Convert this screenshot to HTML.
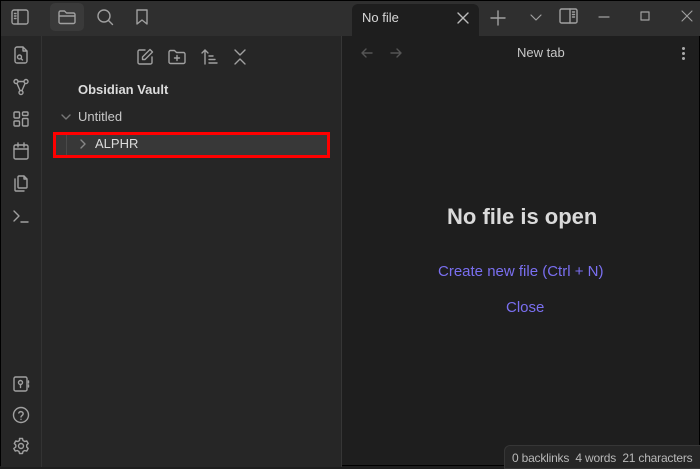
<!DOCTYPE html>
<html><head><meta charset="utf-8"><style>
*{margin:0;padding:0;box-sizing:border-box}
body{width:700px;height:466px;overflow:hidden;background:#1e1e1e;font-family:"Segoe UI","Liberation Sans",sans-serif;position:relative;border:1px solid #000}
.abs{position:absolute}
svg{position:absolute;fill:none;stroke:#a0a0a0;stroke-width:1.4;stroke-linecap:round;stroke-linejoin:round}
.t{color:#dcdcdc;font-size:13px;position:absolute;white-space:nowrap}
</style></head><body>
<div class="abs" style="left:0;top:0;width:700px;height:35px;background:#2f2f2f"></div>
<div class="abs" style="left:0;top:35px;width:41px;height:431px;background:#262626;border-right:1px solid #333"></div>
<div class="abs" style="left:41px;top:35px;width:300px;height:431px;background:#262626;border-right:1px solid #363636"></div>
<svg style="left:9px;top:6px" width="20" height="20" viewBox="0 0 20 20"><rect x="2" y="3" width="16" height="14" rx="2"/><path d="M8 3v14M4.5 6.5h1.5M4.5 9h1.5M4.5 11.5h1.5"/></svg>
<div class="abs" style="left:49px;top:2px;width:34px;height:28px;background:#3a3a3a;border-radius:5px"></div>
<svg style="left:56px;top:6px" width="20" height="20" viewBox="0 0 20 20"><path d="M2 5.5a1.5 1.5 0 0 1 1.5-1.5h4l2 2h7a1.5 1.5 0 0 1 1.5 1.5v7.5a1.5 1.5 0 0 1-1.5 1.5h-13A1.5 1.5 0 0 1 2 15zM2 9h16"/></svg>
<svg style="left:94px;top:6px" width="20" height="20" viewBox="0 0 20 20"><circle cx="9" cy="9" r="6"/><path d="M13.5 13.5l4 4"/></svg>
<svg style="left:131px;top:6px" width="20" height="20" viewBox="0 0 20 20"><path d="M5 3h10v14l-5-4-5 4z"/></svg>
<div class="abs" style="left:351px;top:3px;width:127px;height:32px;background:#1e1e1e;border-radius:6px 6px 0 0"></div>
<div class="t" style="left:361px;top:9px;color:#d8d8d8">No file</div>
<svg style="left:455px;top:10px;stroke:#bbb" width="14" height="14" viewBox="0 0 14 14"><path d="M2 2l10 10M12 2L2 12"/></svg>
<svg style="left:488px;top:8px" width="18" height="18" viewBox="0 0 18 18"><path d="M9 2v14M2 9h14"/></svg>
<svg style="left:527px;top:8px;stroke-width:1.2" width="16" height="16" viewBox="0 0 16 16"><path d="M3 6l5 5 5-5"/></svg>
<svg style="left:557px;top:5px" width="22" height="22" viewBox="0 0 22 22"><rect x="2" y="3" width="17" height="14" rx="1.5"/><path d="M12 3v14M14.5 6h2M14.5 8.5h2M14.5 11h2"/></svg>
<svg style="left:595px;top:8px;stroke-width:1.2" width="16" height="16" viewBox="0 0 16 16"><path d="M3 8h10"/></svg>
<svg style="left:636px;top:7px;stroke-width:1.2" width="16" height="16" viewBox="0 0 16 16"><rect x="4" y="4" width="8" height="8"/></svg>
<svg style="left:678px;top:7px;stroke-width:1.1" width="16" height="16" viewBox="0 0 16 16"><path d="M3 3l10 10M13 3L3 13"/></svg>
<svg style="left:10px;top:44px" width="20" height="20" viewBox="0 0 20 20"><path d="M12 2H6a2 2 0 0 0-2 2v12a2 2 0 0 0 2 2h8a2 2 0 0 0 2-2V6zM12 2v4h4"/><circle cx="8.5" cy="12" r="2"/><path d="M10 13.5l1.5 1.5"/></svg>
<svg style="left:10px;top:76px" width="20" height="20" viewBox="0 0 20 20"><circle cx="5" cy="4.5" r="2"/><circle cx="15" cy="4.5" r="2"/><circle cx="10" cy="15.5" r="2"/><path d="M6 6.5l3 7M14 6.5l-3 7M7 4.5h6"/></svg>
<svg style="left:10px;top:108px" width="20" height="20" viewBox="0 0 20 20"><rect x="3" y="3" width="5.5" height="6" rx="1"/><rect x="11.5" y="3" width="5.5" height="3.5" rx="1"/><rect x="3" y="12" width="5.5" height="5" rx="1"/><rect x="11.5" y="9.5" width="5.5" height="7.5" rx="1"/></svg>
<svg style="left:10px;top:140px" width="20" height="20" viewBox="0 0 20 20"><rect x="3" y="4" width="14" height="14" rx="1.5"/><path d="M3 8h14M7 2v4M13 2v4"/></svg>
<svg style="left:10px;top:172px" width="20" height="20" viewBox="0 0 20 20"><path d="M8 3h5l3 3v8a1 1 0 0 1-1 1H8a1 1 0 0 1-1-1V4a1 1 0 0 1 1-1zM13 3v3h3M4 6v11a1 1 0 0 0 1 1h8"/></svg>
<svg style="left:10px;top:205px" width="20" height="20" viewBox="0 0 20 20"><path d="M3 5l5 5-5 5M10 16h7"/></svg>
<svg style="left:10px;top:373px" width="20" height="20" viewBox="0 0 20 20"><rect x="3" y="3" width="13" height="14" rx="1.5"/><circle cx="9.5" cy="8.5" r="2"/><path d="M9.5 10.5v3M17.5 7v2M17.5 11v2"/></svg>
<svg style="left:10px;top:404px" width="20" height="20" viewBox="0 0 20 20"><circle cx="10" cy="10" r="7.5"/><path d="M7.8 8a2.3 2.3 0 0 1 4.4.8c0 1.5-2.2 2-2.2 3.2M10 14.3v.1"/></svg>
<svg style="left:10px;top:435px" width="20" height="20" viewBox="0 0 20 20"><circle cx="10" cy="10" r="2.5"/><path d="M8.5 2.5h3l.5 2 1.7 1 2-.6 1.5 2.6-1.5 1.5v2l1.5 1.5-1.5 2.6-2-.6-1.7 1-.5 2h-3l-.5-2-1.7-1-2 .6-1.5-2.6L4.8 11V9L3.3 7.5l1.5-2.6 2 .6 1.7-1z"/></svg>
<svg style="left:134px;top:46px" width="20" height="20" viewBox="0 0 20 20"><path d="M10 3H4.5A1.5 1.5 0 0 0 3 4.5v11A1.5 1.5 0 0 0 4.5 17h11a1.5 1.5 0 0 0 1.5-1.5V10"/><path d="M15 2.5l2.5 2.5L10 12.5H7.5V10z"/></svg>
<svg style="left:166px;top:46px" width="20" height="20" viewBox="0 0 20 20"><path d="M2 5a1.5 1.5 0 0 1 1.5-1.5h4l2 2h7A1.5 1.5 0 0 1 18 7v8a1.5 1.5 0 0 1-1.5 1.5h-13A1.5 1.5 0 0 1 2 15zM10 8.5v5M7.5 11h5"/></svg>
<svg style="left:198px;top:46px" width="20" height="20" viewBox="0 0 20 20"><path d="M3 6l3-3 3 3M6 3v14M10 9h4M10 12.5h6M10 16h8"/></svg>
<svg style="left:229px;top:46px" width="20" height="20" viewBox="0 0 20 20"><path d="M5 3l5 5 5-5M5 17l5-5 5 5"/></svg>
<div class="t" style="left:77px;top:81px;font-weight:bold">Obsidian Vault</div>
<svg style="left:59px;top:110px;stroke:#777" width="12" height="12" viewBox="0 0 12 12"><path d="M2 4l4 4 4-4"/></svg>
<div class="t" style="left:77px;top:108px;color:#c8c8c8">Untitled</div>
<div class="abs" style="left:52px;top:131px;width:277px;height:26px;border:3px solid #ff0000;background:#383838"></div>
<div class="abs" style="left:65px;top:134px;width:1px;height:20px;background:#4a4a4a"></div>
<svg style="left:76px;top:137px;stroke:#888" width="12" height="12" viewBox="0 0 12 12"><path d="M4 2l4 4-4 4"/></svg>
<div class="t" style="left:94px;top:135px;color:#dcdcdc">ALPHR</div>
<svg style="left:359px;top:45px;stroke:#555" width="14" height="14" viewBox="0 0 14 14"><path d="M12 7H2M6 3L2 7l4 4"/></svg>
<svg style="left:388px;top:45px;stroke:#555" width="14" height="14" viewBox="0 0 14 14"><path d="M2 7h10M8 3l4 4-4 4"/></svg>
<div class="t" style="left:516px;top:44px;color:#c8c8c8">New tab</div>
<div class="abs" style="left:681px;top:46px;width:3px;height:3px;border-radius:2px;background:#aaa;box-shadow:0 5px 0 #aaa,0 10px 0 #aaa"></div>
<div class="t" style="left:446px;top:203px;font-size:22px;font-weight:bold;color:#dadada">No file is open</div>
<div class="t" style="left:437px;top:262px;font-size:15px;color:#7a6ff0">Create new file (Ctrl + N)</div>
<div class="t" style="left:505px;top:298px;font-size:15px;color:#7a6ff0">Close</div>
<div class="abs" style="left:503px;top:444px;width:200px;height:24px;background:#262626;border:1px solid #363636;border-radius:6px 0 0 0"></div>
<div class="t" style="left:511px;top:450px;font-size:12px;color:#b8b8b8;letter-spacing:-0.2px">0 backlinks&nbsp;&nbsp;4 words&nbsp;&nbsp;21 characters</div>
</body></html>
